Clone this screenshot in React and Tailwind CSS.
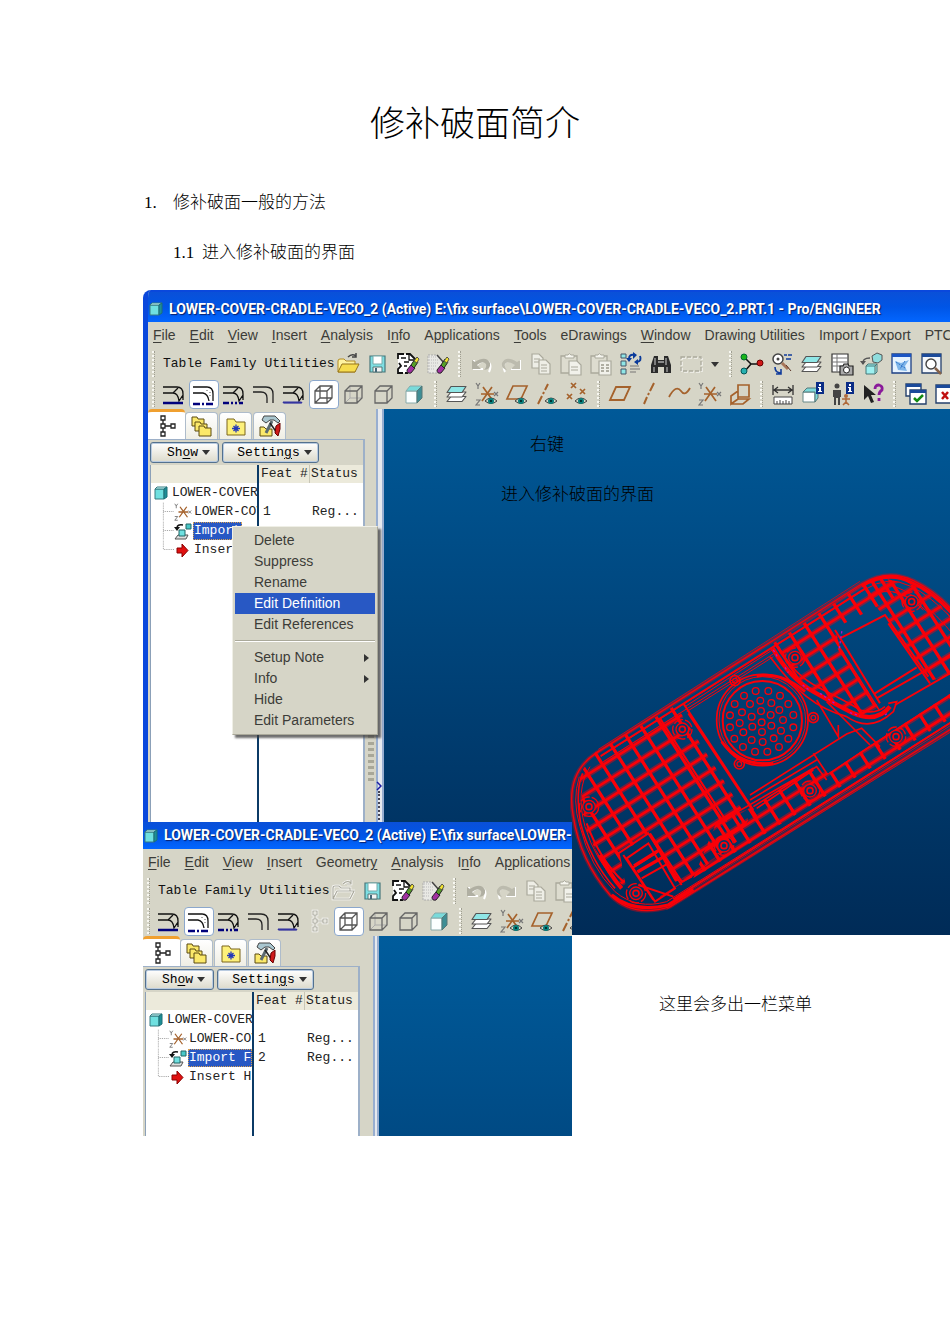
import React from "react";

const S = (p) => (
  <svg viewBox="0 0 24 24" className="h-6 w-6 shrink-0" fill="none" aria-hidden="true" {...p} />
);

const edgeShape = (
  <path d="M1 5h14M1 11h10M15 5q6 0 6 7v6M11 11q5 0 6 8l4-6M11 11l5-5" stroke="#111" strokeWidth="1.3" />
);
const sheets = (
  <g stroke="#555" strokeWidth="1.2" strokeLinejoin="round">
    <path d="M6 14.500h15l-4 5H2z" fill="#fff" />
    <path d="M6 10h15l-4 5H2z" fill="#fff" />
    <path d="M6 4.500h15l-4 6H2z" fill="#8fe6e6" />
  </g>
);
const eye = (
  <g>
    <path d="M10 19q6-6 12 0q-6 5-12 0z" fill="#d8d8c8" stroke="#444" strokeWidth="1" />
    <circle cx="16" cy="19" r="3" fill="#0a7f7c" />
    <circle cx="16" cy="19" r="1.100" fill="#022" />
  </g>
);
const axes = (
  <g>
    <path d="M6 12h13M8 5l10 14M17 5L7 19" stroke="#a5622c" strokeWidth="1.700" />
    <path d="M1 1l2 3 2-3M3 4v3M1 18h4l-4 5h4M19 10l4 4M23 10l-4 4" stroke="#777" strokeWidth="1.200" />
  </g>
);
const eraser = (
  <g>
    <path d="M11 18l4-5 4 3-4 5q-4 1-4-3z" fill="#a030a0" stroke="#222" />
    <path d="M15 13l4-6 3 3-4 6z" fill="#55a028" stroke="#222" />
    <path d="M18 9l3-4 2 2-2 4z" fill="#f4e430" stroke="#554" />
  </g>
);
const cubeWire = "M3 9h12v12H3zM3 9l5-5h12v12l-5 5M15 9l5-5";
const nodeTree = "M6 2h4v4H6zM6 10h4v4H6zM6 18h4v4H6zM16 10h4v4h-4zM8 6v4M8 14v4M10 12h6";
const folderPath = "M2 9q0-2 2-2h4l2 2h9v11H2z";
const info = (
  <g>
    <rect x="15" y="0" width="8" height="12" fill="#0a2c86" />
    <path d="M18 2h2v2h-2zM17 5h3v4h1v1h-4V9h1V6h-1z" fill="#fff" />
  </g>
);

const icons = {
  edge1: <S>{edgeShape}<path d="M1 21h20" stroke="#00007c" strokeWidth="2.500" /></S>,
  edge2: (
    <S>
      <path d="M1 5h14q6 0 6 7v7M1 11h10q5 1 6 8" stroke="#111" strokeWidth="1.300" />
      <path d="M15 5v5M18 10v5" stroke="#555" strokeDasharray="1 2" />
      <path d="M1 22h20" stroke="#00007c" strokeWidth="2.500" strokeDasharray="7 2 2 2" />
    </S>
  ),
  edge3: <S>{edgeShape}<path d="M1 21h20" stroke="#00007c" strokeWidth="2.500" strokeDasharray="6 2 2 2 2 2" /></S>,
  edge4: <S><path d="M1 5h13q7 0 7 7v9M1 10h8q6 0 6 6v5" stroke="#222" strokeWidth="1.300" /></S>,
  edge5: <S>{edgeShape}<path d="M1 21l1-1 1 1 1-1 1 1 1-1 1 1 1-1 1 1 1-1 1 1 1-1 1 1 1-1 1 1 1-1 1 1 1-1 1 1 1-1" stroke="#3434a0" strokeWidth="1.500" /></S>,
  wire: <S><path d={cubeWire + "M8 4v12h12M8 16l-5 5"} stroke="#555" strokeWidth="1.300" /></S>,
  hidden: <S><path d="M8 4v12h12M8 16l-5 5" stroke="#aaa" /><path d={cubeWire} stroke="#666" strokeWidth="1.300" /></S>,
  nohidden: <S><path d={cubeWire} stroke="#666" strokeWidth="1.300" /></S>,
  shaded: (
    <S>
      <path d="M4 9h11v12H4z" fill="#fbffff" stroke="#8aa" />
      <path d="M4 9l4-5h12l-5 5z" fill="#79dada" stroke="#8aa" />
      <path d="M15 9l5-5v12l-5 5z" fill="#3e8e95" stroke="#577" />
    </S>
  ),
  modelTree: <S><path d={nodeTree} stroke="#222" strokeWidth="1.300" /></S>,
  modelTreeOff: <S><path d={nodeTree} stroke="#fff" strokeWidth="2.500" /><path d={nodeTree} stroke="#aeada0" strokeWidth="1.200" /></S>,
  open: (
    <S>
      <path d={folderPath} fill="#fff3a0" stroke="#b18a22" />
      <path d="M6 12h17l-4 8H2z" fill="#f6dc4e" stroke="#94731a" />
      <path d="M12 5q4-4 8-1M20 1v4h-4" stroke="#444" strokeWidth="1.500" />
    </S>
  ),
  openOff: (
    <S>
      <path d="M2 9q0-2 2-2h4l2 2h9v3M2 9v11h17l4-8H6l-4 8M12 5q4-4 8-1M20 1v4h-4" stroke="#fff" strokeWidth="2.600" />
      <path d="M2 9q0-2 2-2h4l2 2h9v3M2 9v11h17l4-8H6l-4 8M12 5q4-4 8-1M20 1v4h-4" stroke="#aaa99c" strokeWidth="1.200" />
    </S>
  ),
  save: (
    <S>
      <path d="M4 4h15v16H4z" fill="#7edfe3" stroke="#47777b" strokeWidth="1.200" />
      <path d="M7 4h9v8H7z" fill="#fff" stroke="#7aa" />
      <path d="M7 15h9v5H7z" fill="#f4f4f4" stroke="#577" /><path d="M9 16h2v4H9z" fill="#467" />
    </S>
  ),
  erase: (
    <S>
      <path d="M2 2h12l7 7-7 12H2z" fill="#fff" />
      <path d="M8 2H2v5M3 11l2 3-3 3v4h5M9 21h3M10 2h4l7 7" stroke="#111" strokeWidth="1.800" />
      <path d="M13 2v6h6M5 6h5M8 10h5M8 14h3" stroke="#111" strokeWidth="1.300" />
      {eraser}
    </S>
  ),
  erase2: (
    <S>
      <path d="M2 3h9l8 8-8 10H2z" fill="#e8e8e4" stroke="#aaa" strokeDasharray="2 1" />
      <path d="M3 5h8M3 8h9M3 11h10M3 14h8M3 17h6" stroke="#bbb" strokeDasharray="1 1" />
      <path d="M11 3l7 8" stroke="#444" strokeWidth="1.500" />
      {eraser}
    </S>
  ),
  undo: (
    <S>
      <path d="M4 7v9h9M5 15Q9 7 16 8q7 2 3 11" transform="translate(1 1)" stroke="#fff" strokeWidth="2" />
      <path d="M3 8v9h9l-4-4q6-5 9-1 1 3-2 6 7-1 6-7-4-8-15-1z" fill="#b0afa2" />
    </S>
  ),
  redo: (
    <S>
      <path d="M20 7v9h-9M19 15Q15 7 8 8q-7 2-3 11" transform="translate(1 1)" stroke="#fff" strokeWidth="2" />
      <path d="M21 8v9h-9l4-4q-7-5-10-1-1 3 2 6-6-1-5-7 4-8 15-1z" fill="#bcbbae" />
    </S>
  ),
  copy: (
    <S>
      <g stroke="#aaa99c" fill="#eeeee6" strokeWidth="1.200">
        <path d="M3 2h7l4 4v10H3z" /><path d="M10 8h7l4 4v10H10z" />
      </g>
      <path d="M5 7h6M5 10h5M12 13h6M12 16h6M12 19h6" stroke="#aaa99c" />
    </S>
  ),
  paste: (
    <S>
      <path d="M2 4h16v17H2z" fill="#dddccf" stroke="#aaa99c" strokeWidth="1.300" />
      <path d="M6 6V3h3q1-3 3 0h3v3z" fill="#f5f5ee" stroke="#aaa99c" />
      <path d="M10 9h8l4 4v10H10z" fill="#f1f1ea" stroke="#aaa99c" strokeWidth="1.200" /><path d="M12 15h7M12 18h7" stroke="#aaa99c" />
    </S>
  ),
  pasteSpecial: (
    <S>
      <path d="M2 4h16v17H2z" fill="#dddccf" stroke="#aaa99c" strokeWidth="1.300" />
      <path d="M6 6V3h3q1-3 3 0h3v3z" fill="#f5f5ee" stroke="#aaa99c" />
      <path d="M10 9h12v14H10z" fill="#f1f1ea" stroke="#aaa99c" strokeWidth="1.200" />
      <path d="M12 13h3M12 16h3M12 19h3M17 13h3M17 16h3M17 19h3" stroke="#99988b" strokeWidth="1.500" />
    </S>
  ),
  regen: (
    <S>
      <g fill="#8fe6e6" stroke="#456"><path d="M2 2h5v4H2zM2 9h5v5H2zM2 17h5v5H2z" /></g>
      <path d="M11 14h9M11 17h10M11 20h6" stroke="#777" strokeWidth="1.200" />
      <path d="M10 7q0-5 5-4M21 4q2 5-3 6" stroke="#0a3a9a" strokeWidth="2" />
      <path d="M14 0l4 3-4 4zM19 7v6l-4-3zM7 6h6l-3 4z" fill="#0a3a9a" />
    </S>
  ),
  find: (
    <S>
      <path d="M5 4h4v4h6V4h4l3 9v8h-7v-6h-6v6H2v-8z" fill="#2b2b2b" />
      <path d="M6 6v7M17 6v7M5 15v5M18 15v5M9 10h6" stroke="#aaa" strokeWidth="1.300" />
    </S>
  ),
  select: <S><path d="M3 6h20v14H3z" stroke="#fff" strokeDasharray="4 2" /><path d="M2 5h20v14H2z" stroke="#aaa99c" strokeWidth="1.300" strokeDasharray="4 2" /></S>,
  nodes: (
    <S>
      <path d="M5 6l6 6h9M11 12l-6 7" stroke="#111" strokeWidth="1.500" />
      <circle cx="4" cy="5" r="3" fill="#19b519" stroke="#063" /><circle cx="20" cy="11" r="3" fill="#d01818" stroke="#600" />
      <circle cx="4" cy="19" r="3" fill="#26b0b0" stroke="#055" />
    </S>
  ),
  reorient: (
    <S>
      <circle cx="8" cy="7" r="5" fill="#fff" stroke="#444" strokeWidth="1.500" /><circle cx="8" cy="7" r="1.500" fill="#444" />
      <path d="M12 11l6 6" stroke="#a8765a" strokeWidth="3" />
      <path d="M14 3h3M18 3h4M16 7h5M5 15q0 6 6 6M11 17v5h-5" stroke="#123c9c" strokeWidth="1.600" />
      <path d="M16 13l5 6" stroke="#5a3428" />
    </S>
  ),
  layers: <S>{sheets}</S>,
  snapshot: (
    <S>
      <path d="M2 2h16v18H2z" fill="#fff" stroke="#333" strokeWidth="1.200" />
      <path d="M2 6h16M2 10h16M2 14h16M7 2v18" stroke="#777" />
      <path d="M10 14h3l1-2h4l1 2h4v9H10z" fill="#aaa" stroke="#222" strokeWidth="1.200" /><circle cx="16.500" cy="18" r="3" fill="#fff" stroke="#222" />
    </S>
  ),
  orient: (
    <S>
      <path d="M6 14h9v8H6zM6 14l2-2h9l-2 2M17 12v8l-2 2" fill="#9df0f0" stroke="#477" />
      <path d="M12 4l5-3 5 2v5l-4 3-5-1z" fill="#8fdddd" stroke="#555" />
      <path d="M3 12q-1-6 7-6" stroke="#555" strokeWidth="1.500" /><path d="M0 9h6l-3 4z" fill="#555" />
    </S>
  ),
  viewWin: (
    <S>
      <path d="M2 2h19v19H2z" fill="#e6f3ff" stroke="#1c3f84" strokeWidth="1.300" /><path d="M2 2h19v3H2z" fill="#1b55c4" />
      <path d="M5 9l6 2 8-3-4 6 2 5-9-1z" fill="#7fb6ea" /><path d="M6 10l9 6M15 9l-5 8" stroke="#2f74c8" strokeDasharray="2 1" />
    </S>
  ),
  zoomWin: (
    <S>
      <path d="M2 2h19v19H2z" fill="#f4f7fb" stroke="#24406c" strokeWidth="1.300" /><path d="M2 2h19v3H2z" fill="#1b4a9a" />
      <circle cx="11" cy="12" r="5" fill="#fff" stroke="#444" strokeWidth="1.400" /><path d="M15 16l6 6" stroke="#85624a" strokeWidth="2.500" />
    </S>
  ),
  axesEye: <S>{axes}{eye}</S>,
  planeEye: <S><path d="M8 4h14l-6 13H2z" stroke="#a5622c" strokeWidth="1.700" />{eye}</S>,
  lineEye: <S><path d="M13 2l-3 6M9 10l-1 2M7 14l-4 8" stroke="#a5622c" strokeWidth="2" />{eye}</S>,
  pointsEye: <S><path d="M6 1l5 5M11 1L6 6M2 12l5 5M7 12l-5 5M15 7l5 5M20 7l-5 5" stroke="#a5622c" strokeWidth="1.700" />{eye}</S>,
  plane: <S><path d="M8 5h14l-6 13H2z" stroke="#a5622c" strokeWidth="1.800" /></S>,
  line: <S><path d="M16 1l-4 8M11 11l-1 2M9 15l-3 7" stroke="#a5622c" strokeWidth="2" /></S>,
  curve: <S><path d="M1 15q7-13 12-6 4 6 9-3" stroke="#a5622c" strokeWidth="1.800" /></S>,
  axes: <S>{axes}</S>,
  csys: <S><path d="M10 3h11v12H10zM10 9l-7 5v8l7-5M10 17v-2M4 22h11l6-5H10" stroke="#a5622c" strokeWidth="1.700" /></S>,
  measure: (
    <S>
      <path d="M2 3v10M22 3v10M3 8h18M7 5L3 8l4 3M17 5l4 3-4 3" stroke="#333" strokeWidth="1.300" />
      <path d="M3 15h18v7H3z" fill="#fff" stroke="#444" /><path d="M6 19v3M9 18v4M12 19v3M15 18v4M18 19v3" stroke="#444" />
    </S>
  ),
  cubeInfo: <S><path d="M2 10h12v10H2z" fill="#fff" stroke="#688" /><path d="M2 10l4-4h11v10l-3 4V10z" fill="#7ddada" stroke="#577" />{info}</S>,
  peopleInfo: (
    <S>
      <circle cx="6" cy="4" r="2.500" fill="#444" /><path d="M2 8h8v7H9v8H7v-7H5v7H3v-8H2z" fill="#444" />
      <circle cx="15" cy="14" r="2" fill="#b06a3a" /><path d="M11 17h8M15 16v4l-3 3M15 20l3 3" stroke="#b06a3a" strokeWidth="1.600" />{info}
    </S>
  ),
  help: (
    <S>
      <path d="M3 3v15l4-4 3 7 3-1-3-7h5z" fill="#222" />
      <path d="M14 7q0-4 4-4 4 1 3 5-3 2-3 5M18 16v3" stroke="#8a1a9a" strokeWidth="2.800" />
    </S>
  ),
  winOk: (
    <S>
      <path d="M2 2h15v12H2z" fill="#fff" stroke="#24406c" strokeWidth="1.400" /><path d="M2 2h15v3H2z" fill="#1b4a9a" />
      <path d="M6 8h16v14H6z" fill="#fff" stroke="#24406c" strokeWidth="1.400" /><path d="M6 8h16v3H6z" fill="#1b4a9a" />
      <path d="M10 16l3 3 6-6" stroke="#138a13" strokeWidth="2.500" />
    </S>
  ),
  winClose: (
    <S>
      <path d="M2 3h20v18H2z" fill="#fff" stroke="#24406c" strokeWidth="1.400" /><path d="M2 3h20v3H2z" fill="#1b4a9a" />
      <path d="M8 10l6 7M14 10l-6 7" stroke="#c01010" strokeWidth="2.500" />
    </S>
  ),
  folders: (
    <S>
      <g fill="#fbe96a" stroke="#5b4a12">
        <path d="M2 3h5l1 2h6v7H2z" /><path d="M5 8h5l1 2h6v7H5z" /><path d="M9 12h5l1 2h6v8H9z" />
      </g>
    </S>
  ),
  favorites: (
    <S>
      <path d="M3 5h7l2 3h9v13H3z" fill="#fdf07a" stroke="#7a651c" />
      <path d="M12 10.500v8M8 14.500h8M9.500 12l5 5M14.500 12l-5 5" stroke="#2438b8" strokeWidth="1.300" />
    </S>
  ),
  tools: (
    <S>
      <path d="M2 13h4l2 2h6v7H2z" fill="#fbe96a" stroke="#5b4a12" />
      <path d="M6 2h11l5 5-2 2-4-3h-4L8 9 4 6z" fill="#a9c6cf" stroke="#444" />
      <path d="M14 7L8 19" stroke="#5b6a70" strokeWidth="3" /><path d="M12 9l7 10" stroke="#222" strokeWidth="1.500" />
      <path d="M18 12l4-3v6l-2 7-3-3z" fill="#d01a1a" stroke="#600" />
    </S>
  ),
};

const Part = () => (
  <svg viewBox="0 0 16 16" className="h-4 w-4 shrink-0" aria-hidden="true">
    <path d="M2 4h9v10H2z" fill="#6fe0e0" stroke="#387a80" />
    <path d="M2 4l2-2h10l-3 2z" fill="#c9ffff" stroke="#387a80" />
    <path d="M11 4l3-2v10l-3 2z" fill="#1c8f97" stroke="#1c6f77" />
  </svg>
);

const Branch = ({ last }) => (
  <svg viewBox="0 0 13 19" className="h-[19px] w-[12px] shrink-0" aria-hidden="true">
    <path d={last ? "M1.500 0v9.500H13" : "M1.500 0v19M1.500 9.500H13"} stroke="#999" strokeDasharray="1 1" fill="none" />
  </svg>
);

const treeIcons = {
  axes: (
    <svg viewBox="0 0 24 24" fill="none" className="h-[18px] w-[18px] shrink-0" aria-hidden="true">{axes}</svg>
  ),
  import: (
    <svg viewBox="0 0 18 18" fill="none" className="h-[18px] w-[18px] shrink-0" aria-hidden="true">
      <path d="M4 13h10l-2 4H1z" fill="#ddd" stroke="#555" /><path d="M5 8h6v6H5z" fill="#6fe0e0" stroke="#266" />
      <path d="M12 2h5v5h-5z" fill="#48c8c8" stroke="#266" /><path d="M3 6q0-4 6-3" stroke="#111" strokeWidth="1.500" /><path d="M0 5h6L3 9z" fill="#111" />
    </svg>
  ),
  insert: (
    <svg viewBox="0 0 18 18" className="h-[18px] w-[18px] shrink-0" aria-hidden="true">
      <path d="M3 7h5V3l6 6.500L8 16v-4H3z" fill="#e01010" stroke="#8a0000" />
    </svg>
  ),
};

const Grip = ({ first }) => (
  <span className={(first ? "w-[11px]" : "w-[13px]") + " flex shrink-0 justify-center"}>
    <span className="h-[26px] border-l-2 border-dotted border-[#f8f8f2]" />
    <span className="h-[26px] border-l border-dotted border-[#a09f92]" />
  </span>
);

const Tool = ({ name, active }) => (
  <button
    type="button"
    aria-label={name}
    className={
      "flex h-[29px] w-[30px] shrink-0 items-center justify-center rounded-sm border " +
      (active ? "border-[#8ba7cc] bg-white" : "border-transparent")
    }
  >
    {icons[name]}
  </button>
);

const Toolbar = ({ items, label, active = [] }) => (
  <div className="flex h-[30px] items-center overflow-hidden">
    <Grip first />
    {label && (
      <span className="w-[174px] shrink-0 whitespace-nowrap pl-1 font-['Liberation_Mono',monospace] text-[13px] text-[#111]">{label}</span>
    )}
    {items.map((n, i) =>
      n === "|" ? (
        <Grip key={i} />
      ) : n === "v" ? (
        <button key={i} type="button" aria-label="Selection options" className="flex w-[18px] shrink-0 justify-center">
          <span className="border-x-4 border-t-[5px] border-x-transparent border-t-[#333]" />
        </button>
      ) : (
        <Tool key={i} name={n} active={active.includes(n)} />
      )
    )}
  </div>
);

const Mnemonic = ({ text }) => {
  const [a, b, c] = text.split("_");
  return b === undefined ? text : <>{a}<u className="underline-offset-2">{b}</u>{c}</>;
};

const MenuBar = ({ items }) => (
  <nav className="flex h-[27px] items-center gap-[14px] overflow-hidden whitespace-nowrap pl-[5px] text-[14px] text-[#3c3c38]">
    {items.map((t) => (
      <button key={t} type="button" className="shrink-0"><Mnemonic text={t} /></button>
    ))}
  </nav>
);

const TitleBar = ({ className }) => (
  <header
    className={
      "flex items-center gap-[5px] overflow-hidden whitespace-nowrap bg-linear-to-b from-[#0a50d8] via-[#0055e6] to-[#0366ff] font-['Roboto',sans-serif] text-[14px] font-bold text-white [text-shadow:1px_1px_1px_#0a1f6a] " +
      className
    }
  >
    <Part />
    <span>LOWER-COVER-CRADLE-VECO_2 (Active) E:\fix surface\LOWER-COVER-CRADLE-VECO_2.PRT.1 - Pro/ENGINEER</span>
  </header>
);

const DropButton = ({ text, className }) => (
  <button
    type="button"
    className={
      "flex h-[21px] items-center justify-center gap-1 rounded-[3px] border border-[#53718f] bg-linear-to-b from-white to-[#dcdacb] pl-2 font-['Liberation_Mono',monospace] text-[13px] text-black shadow-[inset_0_0_0_1px_#b9cbe0] " +
      className
    }
  >
    <span><Mnemonic text={text} /></span>
    <span className="border-x-4 border-t-[5px] border-x-transparent border-t-[#333]" />
  </button>
);

const tabs = [["modelTree", "Model Tree"], ["folders", "Folder Browser"], ["favorites", "Favorites"], ["tools", "Connections"]];

const SidePanel = ({ rows, sash, children }) => (
  <aside className="relative flex w-[236px] shrink-0">
    <div className="flex w-[217px] shrink-0 flex-col">
      <div className="flex h-[30px]" role="tablist">
        {tabs.map(([n, label], i) => (
          <button
            key={n}
            type="button"
            role="tab"
            aria-label={label}
            className={
              i === 0
                ? "flex w-[37px] items-center justify-center rounded-t-sm border-t-[3px] border-[#f0a030] bg-white"
                : "mt-[3px] mr-px flex w-[33px] items-center justify-center rounded-t-sm border border-b-0 border-[#aebccb] bg-linear-to-b from-white to-[#efeee4]"
            }
          >
            {icons[n]}
          </button>
        ))}
      </div>
      <div className="flex grow flex-col border-t border-r-2 border-[#9db0c8] pl-[2px]">
        <div className="flex items-center gap-[3px] pt-[2px] pb-[2px]">
          <DropButton text="Sh_o_w" className="w-[69px]" />
          <DropButton text="Settin_g_s" className="w-[97px]" />
        </div>
        <div className="flex grow flex-col border-l border-[#8ba0b8] bg-white font-['Liberation_Mono',monospace] text-[13px] leading-[18px] text-[#222]">
          <table className="w-full table-fixed border-separate border-spacing-0">
            <thead>
              <tr className="h-[18px] bg-[#eceadb] text-left">
                <th className="w-[106px] p-0" aria-label="Name" />
                <th className="w-[52px] border-l-2 border-[#0b3a66] p-0 pl-[2px] font-normal whitespace-nowrap">Feat #</th>
                <th className="border-l border-[#c8c6b6] p-0 pl-[1px] font-normal">Status</th>
              </tr>
            </thead>
            <tbody>
              {rows.map((r, i) => (
                <tr key={i} className="h-[19px]">
                  <td className="overflow-hidden p-0">
                    <div className="flex h-[19px] items-center overflow-hidden whitespace-nowrap pl-[2px]">
                      {i === 0 ? (
                        <><Part /><span className="pl-[3px]">{r.name}</span></>
                      ) : (
                        <>
                          <span className="w-[9px] shrink-0" />
                          <Branch last={i === rows.length - 1} />
                          {treeIcons[r.icon]}
                          <span className={r.selected ? "ml-px border border-dotted border-[#d8a050] bg-[#2858c4] leading-[16px] text-white" : "pl-[2px]"}>{r.name}</span>
                        </>
                      )}
                    </div>
                  </td>
                  <td className="border-l-2 border-[#0b3a66] p-0 pl-[4px]">{r.feat}</td>
                  <td className="p-0 pl-[3px]">{r.status}</td>
                </tr>
              ))}
            </tbody>
          </table>
          <div className="flex grow">
            <span className="w-[106px]" />
            <span className="border-l-2 border-[#0b3a66]" />
          </div>
        </div>
      </div>
    </div>
    <div className="flex w-[13px] justify-center">
      {sash && <span className="mt-[326px] h-[46px] border-x-3 border-dotted border-[#a8a798]" />}
    </div>
    <div className="flex grow flex-col justify-start border-x-2 border-[#98aed0] bg-[#e6e9ee]">
      {sash && (
        <svg viewBox="0 0 6 10" className="mt-[372px] -ml-[2px] h-[10px] w-[6px]" fill="none" aria-hidden="true">
          <path d="M1 1l4 4-4 4" stroke="#1a1aa0" strokeWidth="1.500" />
        </svg>
      )}
      {sash && <span className="h-[40px] w-0 border-l-2 border-dotted border-[#445]" />}
    </div>
    {children}
  </aside>
);

const ContextMenu = () => (
  <menu className="absolute top-[117px] left-[84px] w-[146px] border border-[#aaa99a] border-t-[#efefe6] border-l-[#efefe6] bg-[#d6d5c7] px-[2px] py-[3px] text-[14px] text-[#3c3c38] shadow-[3px_3px_2px_rgba(60,60,60,0.75)]">
    {["Delete", "Suppress", "Rename", "Edit Definition", "Edit References", "-", "Setup Note", "Info", "Hide", "Edit Parameters"].map((t) =>
      t === "-" ? (
        <li key={t} className="my-[5px] border-t border-b border-t-[#aaa99a] border-b-white" />
      ) : (
        <li key={t}>
          <button
            type="button"
            className={
              "flex h-[21px] w-full items-center justify-between pr-[6px] pl-[19px] whitespace-nowrap " +
              (t === "Edit Definition" ? "bg-[#2858c4] text-white" : "")
            }
          >
            {t}
            {(t === "Setup Note" || t === "Info") && <span className="border-y-4 border-l-[5px] border-y-transparent border-l-[#333]" />}
          </button>
        </li>
      )
    )}
  </menu>
);

const holes = [
  [587, 393], [625, 393], [552, 407], [660, 407], [524, 432], [685, 432], [570, 432], [601, 422], [634, 429], [658, 450],
  [546, 457], [510, 466], [575, 470], [603, 453], [632, 465], [700, 465], [669, 480], [539, 489], [510, 502], [577, 500],
  [605, 487], [634, 497], [700, 502], [663, 512], [550, 517], [606, 516], [523, 536], [575, 540], [608, 546], [641, 535],
  [685, 536], [549, 561], [657, 561], [585, 575], [622, 575],
];
const bosses = [[367, 508], [87, 740], [228, 1000], [492, 857], [750, 692], [1008, 530], [1055, 125], [705, 293]];
const ears = [[525, 362], [760, 473], [538, 612]];
const body =
  "M110 578L905 72Q985 25 1060 62Q1130 95 1185 160V500L330 1040Q220 1075 150 1005Q60 900 40 770Q15 640 110 578Z";

const Ribs = ({ clip, x0, x1, y0, y1, dx, dy, ox = 0, oy = 0 }) => {
  const v = [];
  const u = [];
  for (let x = x0; x <= x1; x += dx) v.push(`M${x + ox} ${y0}V${y1}`);
  for (let y = y0; y <= y1; y += dy) u.push(`M${x0} ${y + oy}H${x1}`);
  return (
    <g clipPath={`url(#${clip})`}>
      <g transform="rotate(-32.4)">
        <path d={v.join("")} strokeWidth="10" />
        <path d={u.join("")} strokeWidth="8" />
        <path d={u.join("")} strokeWidth="18" opacity="0.45" />
      </g>
    </g>
  );
};

const Wireframe = () => (
  <svg viewBox="30 0 1140 1125" className="ml-[186px] block w-[380px] shrink-0" fill="none" stroke="#fa0008" role="img" aria-label="Lower cover wireframe">
    <defs>
      <clipPath id="ribsLeft"><path d="M60 640L105 578 365 425 580 750 530 845 395 950 345 965 265 820 180 885 200 990 120 900 75 800z" /></clipPath>
      <clipPath id="ribsMid"><path d="M640 250L905 75 985 50 1010 110 825 205 840 260 960 450 900 465 720 370z" /></clipPath>
      <clipPath id="ribsRight"><path d="M950 50L1060 75 1120 110 1180 180V340L1105 365 985 185 905 85z" /></clipPath>
      <clipPath id="ribsLow"><path d="M470 785L580 740 760 622 805 640 925 560 1180 395V470L1000 582 400 955z" /></clipPath>
    </defs>
    <path d={body} strokeWidth="4" />
    <path d={body} strokeWidth="12" opacity="0.4" />
    <path d="M122 588L915 86M340 1018L1185 480" strokeWidth="6" />
    <g strokeWidth="3">
      <path d="M122 590L915 88Q985 45 1050 78Q1110 105 1185 185M58 650Q35 720 60 800Q90 920 165 995Q230 1050 320 1025L1185 478" />
      <path d="M130 605L640 282M380 455L640 290M90 620Q45 690 75 800Q105 900 180 980M375 440L640 268" />
      <path d="M115 568L900 64M330 1030L1185 488M320 1048L1185 508M300 1010L1185 455" opacity="0.75" />
      <path d="M985 75Q1070 90 1185 230M1000 95Q1080 115 1140 200M960 95Q1030 85 1090 150" />
    </g>
    <path d="M905 78Q985 30 1055 68Q1120 95 1185 170M155 1005Q220 1060 325 1035L400 988" strokeWidth="10" />
    <path d="M68 640Q45 690 62 790Q90 900 165 985" strokeWidth="5" />
    <path d="M120 885Q150 945 185 985" strokeWidth="12" />
    <Ribs clip="ribsLeft" x0={-560} x1={60} y0={400} y1={1100} dx={53} dy={47} ox={21} />
    <Ribs clip="ribsMid" x0={350} x1={900} y0={440} y1={1000} dx={53} dy={47} ox={8} oy={12} />
    <Ribs clip="ribsRight" x0={650} x1={1020} y0={500} y1={1000} dx={48} dy={46} ox={10} />
    <Ribs clip="ribsLow" x0={-200} x1={860} y0={878} y1={1160} dx={53} dy={46} ox={15} />
    <path d="M270 820L365 965 395 950M235 975L340 1010M80 790Q120 900 190 965" strokeWidth="6" />
    <path d="M810 640L925 562 1185 398M590 745L760 630" strokeWidth="5" />
    <g strokeWidth="6">
      <path d="M370 430L580 750M385 460L590 770M300 475L500 785" />
      <path d="M570 705L860 522 905 505 960 560M570 720L770 600M490 780L760 625M580 740L770 620 800 660M760 580L800 640" strokeWidth="5" />
      <path d="M175 880L265 820 365 975M190 885L280 1020M200 895L265 850 345 985 285 1025zM215 925L290 878M245 955L325 910" />
      <path d="M222 918L295 872M232 936L308 892" strokeWidth="10" />
      <path d="M850 250L960 430M835 265L945 440M825 210L850 250M840 235L975 165 1105 350M985 190L1110 370M945 400L1070 322M950 415L1170 290M1005 435L1170 340" />
      <path d="M770 420L835 530V495M800 425L870 495 930 555" strokeWidth="5" />
    </g>
    <path d="M638 265Q690 355 760 395T880 460Q950 490 990 440" strokeWidth="13" />
    <path d="M655 260Q700 345 780 385T900 450Q945 465 975 440M630 290Q690 370 740 410T860 470Q930 520 1000 455L1010 425 985 430" strokeWidth="5" />
    <path d="M640 270l12 20M675 322l10 16M728 375l18 14M780 400l50 34M870 458l30 10M838 265l8-55M975 465l12-8" stroke="#b010c8" strokeWidth="4" strokeDasharray="7 8" />
    <circle cx="607" cy="480" r="137" strokeWidth="5" />
    <circle cx="607" cy="480" r="130" strokeWidth="3" />
    <circle cx="607" cy="482" r="119" strokeWidth="6" />
    <path d="M485 545Q540 620 640 610M590 348Q665 335 735 395" strokeWidth="9" />
    <g strokeWidth="4">
      {holes.map(([x, y]) => <circle key={x + "-" + y} cx={x} cy={y} r="10" />)}
    </g>
    {bosses.map(([x, y]) => (
      <g key={x}>
        <circle cx={x} cy={y} r="29" strokeWidth="4" strokeDasharray="30 6" />
        <circle cx={x} cy={y} r="19" strokeWidth="4" fill="#003a6c" />
        <circle cx={x} cy={y} r="9" strokeWidth="5" />
      </g>
    ))}
    {ears.map(([x, y]) => (
      <g key={x}>
        <circle cx={x} cy={y} r="15" strokeWidth="5" />
        <circle cx={x} cy={y} r="7" strokeWidth="4" />
      </g>
    ))}
  </svg>
);

const tool1 = ["save", "erase", "erase2", "|", "undo", "redo", "copy", "paste", "pasteSpecial", "regen", "find", "select", "v", "|", "nodes", "reorient", "layers", "snapshot", "orient", "viewWin", "zoomWin"];
const edges = ["edge1", "edge2", "edge3", "edge4", "edge5"];
const tool2 = ["wire", "hidden", "nohidden", "shaded", "|", "layers", "axesEye", "planeEye", "lineEye", "pointsEye", "|", "plane", "line", "curve", "axes", "csys", "|", "measure", "cubeInfo", "peopleInfo", "help", "|", "winOk", "winClose"];
const menuTail = ["_A_nalysis", "I_n_fo", "A_p_plications"];
const menuEnd = ["_T_ools", "eDrawings", "_W_indow", "Drawing Utilities", "Import / Export", "PTC"];
const chrome = "overflow-hidden bg-[#d6d5c7] font-['Liberation_Sans',sans-serif]";
const note = "text-[17px] leading-[50px] font-light";

const baseRows = [
  { name: "LOWER-COVER" },
  { name: "LOWER-COV", icon: "axes", feat: "1", status: "Reg..." },
];

export default function App() {
  return (
    <main className="min-h-screen overflow-hidden bg-white pt-[100px] font-['Liberation_Serif','Noto_Sans_CJK_SC',serif] text-black">
      <h1 className="text-center text-[35px] leading-[50px] font-light">修补破面简介</h1>
      <div className="mt-[28px] mb-[12px] pl-[144px]">
        <h2 className={"flex " + note}><span className="w-[29px]">1.</span>修补破面一般的方法</h2>
        <h3 className={"flex pl-[29px] " + note}><span className="w-[29px]">1.1</span>进入修补破面的界面</h3>
      </div>

      <section className="pl-[143px]">
        <div className={"rounded-tl-lg border-l-[5px] border-[#0a48dc] " + chrome}>
          <TitleBar className="h-[32px] border-t-2 border-[#0a48dc] pt-1" />
          <MenuBar items={["_F_ile", "_E_dit", "_V_iew", "_I_nsert", ...menuTail, ...menuEnd]} />
          <Toolbar label="Table Family Utilities" items={["open", ...tool1]} />
          <Toolbar items={[...edges, ...tool2]} active={["edge2", "wire"]} />
          <div className="flex">
            <SidePanel
              sash
              rows={[...baseRows, { name: "Import", icon: "import", selected: true }, { name: "Insert", icon: "insert" }]}
            >
              <ContextMenu />
            </SidePanel>
            <div className="flex min-w-0 grow flex-col overflow-hidden bg-linear-to-b from-[#005998] to-[#002b57] font-['Liberation_Serif','Noto_Sans_CJK_SC',serif]">
              <div className="pt-[11px] pb-[40px] pl-[117px]">
                <p className={"pl-[29px] " + note}>右键</p>
                <p className={note}>进入修补破面的界面</p>
              </div>
              <Wireframe />
            </div>
          </div>
        </div>

        <div className="relative -mt-[113px] flex items-start">
          <div className={"w-[429px] shrink-0 " + chrome}>
            <TitleBar className="h-[27px]" />
            <MenuBar items={["_F_ile", "_E_dit", "_V_iew", "_I_nsert", "Geometr_y_", ...menuTail]} />
            <Toolbar label="Table Family Utilities" items={["openOff", ...tool1]} />
            <Toolbar items={[...edges, "modelTreeOff", ...tool2]} active={["edge2", "wire"]} />
            <div className="flex">
              <SidePanel
                rows={[...baseRows, { name: "Import F", icon: "import", selected: true, feat: "2", status: "Reg..." }, { name: "Insert H", icon: "insert" }]}
              />
              <div className="min-h-[200px] grow bg-linear-to-b from-[#005c9c] to-[#004a84]" />
            </div>
          </div>
          <p className={"pt-[158px] pl-[87px] " + note}>这里会多出一栏菜单</p>
        </div>
      </section>
    </main>
  );
}
